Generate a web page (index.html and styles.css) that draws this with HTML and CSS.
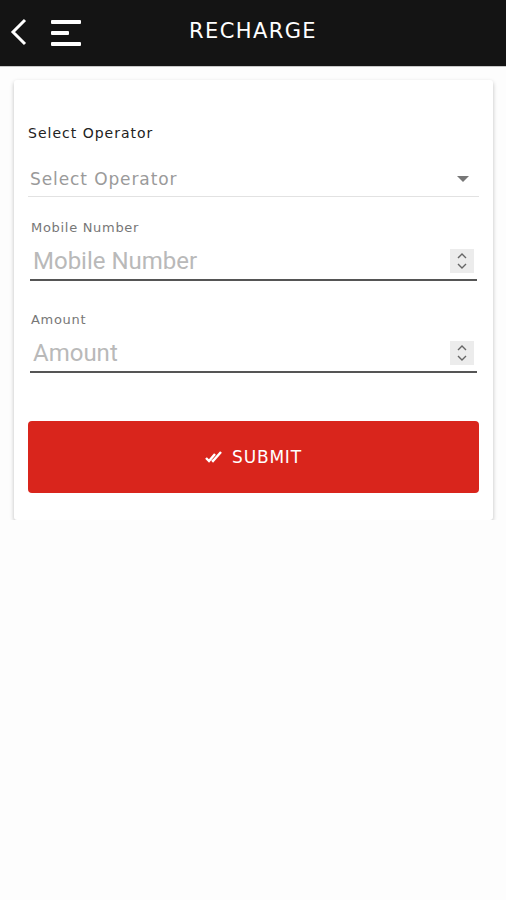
FILE: index.html
```html
<!DOCTYPE html>
<html>
    <head>
        <link rel="stylesheet" href="styles.css">
    </head>
    <body>
        <div class="topbar">
            <svg class="back" width="18" height="30" viewBox="0 0 18 30">
                <path d="M15 3 L3 15 L15 27" fill="none" stroke="#fff" stroke-width="3"/>
            </svg>
            <div class="menu">
                <span class="bar"></span>
                <span class="bar short"></span>
                <span class="bar"></span>
            </div>
            <div class="title">RECHARGE</div>
        </div>

        <div class="card">
            <div class="label big">Select Operator</div>
            <div class="select">
                <span>Select Operator</span>
                <span class="caret"></span>
            </div>

            <div class="label small first">Mobile Number</div>
            <div class="field">
                <input type="text" placeholder="Mobile Number">
                <span class="spin">
                    <svg width="12" height="20" viewBox="0 0 12 20">
                        <path d="M2 7 L6 3 L10 7 M2 13 L6 17 L10 13" fill="none" stroke="#666" stroke-width="1.4"/>
                    </svg>
                </span>
            </div>

            <div class="label small">Amount</div>
            <div class="field">
                <input type="text" placeholder="Amount">
                <span class="spin">
                    <svg width="12" height="20" viewBox="0 0 12 20">
                        <path d="M2 7 L6 3 L10 7 M2 13 L6 17 L10 13" fill="none" stroke="#666" stroke-width="1.4"/>
                    </svg>
                </span>
            </div>

            <button class="submit">
                <svg width="18" height="12" viewBox="0 0 18 12">
                    <path d="M1 7 L4 10 L10 3 M7 9 L8 10 L16 1" fill="none" stroke="#fff" stroke-width="2.4"/>
                </svg>
                SUBMIT
            </button>
        </div>
    </body>
</html>
```

FILE: styles.css
```css
html, body {
    margin: 0;
    background-color: #fdfdfd;
    font-family: "DejaVu Sans", sans-serif;
}

.topbar {
    height: 66px;
    background-color: #141414;
    border-bottom: 1px solid #c8c8c8;
    display: flex;
    align-items: center;
    position: relative;
}

.back {
    margin-left: 10px;
    margin-top: -2px;
}

.menu {
    display: flex;
    flex-direction: column;
    gap: 7px;
    margin-left: 23px;
}

.bar {
    display: block;
    width: 30px;
    height: 4px;
    background-color: #fff;
    border-radius: 1px;
}

.bar.short {
    width: 18px;
}

.title {
    position: absolute;
    left: 0;
    right: 0;
    top: 19px;
    text-align: center;
    color: #fff;
    font-size: 21px;
    letter-spacing: 1.4px;
    pointer-events: none;
}

.card {
    background-color: #fff;
    margin: 13px 13px 0 14px;
    padding: 44px 14px 27px 14px;
    border-radius: 3px;
    box-shadow: 0 2px 4px rgba(0, 0, 0, 0.25);
}

.label {
    color: #333;
}

.label.big {
    font-size: 14px;
    line-height: 18px;
    color: #222;
    letter-spacing: 1px;
}

.label.small {
    font-size: 13px;
    line-height: 16px;
    color: #777;
    margin-top: 31px;
    padding-left: 3px;
    letter-spacing: 0.7px;
}

.label.small.first {
    margin-top: 23px;
}

.select {
    margin-top: 19px;
    height: 36px;
    border-bottom: 1px solid #e2e2e2;
    display: flex;
    align-items: center;
    justify-content: space-between;
    color: #9a9a9a;
    font-size: 17px;
    letter-spacing: 0.9px;
    padding-left: 2px;
    box-sizing: border-box;
}

.caret {
    width: 0;
    height: 0;
    border-left: 6px solid transparent;
    border-right: 6px solid transparent;
    border-top: 6px solid #777;
    margin-right: 10px;
}

.field {
    margin: 6px 2px 0 2px;
    height: 39px;
    border-bottom: 2px solid #555;
    display: flex;
    align-items: center;
    box-sizing: border-box;
}

.field input {
    flex: 1;
    border: none;
    outline: none;
    background: transparent;
    font-family: Roboto, sans-serif;
    font-size: 24px;
    padding: 0 0 0 3px;
    color: #333;
}

.field input::placeholder {
    color: #b9b9b9;
}

.spin {
    width: 24px;
    height: 24px;
    background-color: #ececec;
    display: flex;
    align-items: center;
    justify-content: center;
    margin-right: 3px;
}

.submit {
    margin-top: 48px;
    width: 100%;
    height: 72px;
    background-color: #d9251c;
    border: none;
    border-radius: 4px;
    color: #fff;
    font-family: "DejaVu Sans", sans-serif;
    font-size: 17px;
    letter-spacing: 0.8px;
    display: flex;
    align-items: center;
    justify-content: center;
    gap: 9px;
}
```
